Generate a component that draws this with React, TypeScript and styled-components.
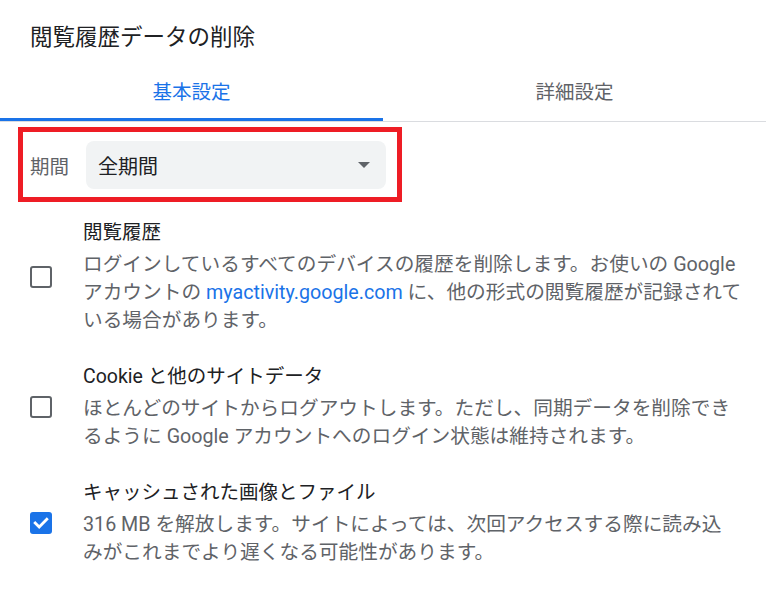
import React from "react";
import styled, { createGlobalStyle } from "styled-components";

const GlobalStyle = createGlobalStyle`
    body {
        margin: 0;
        background: #ffffff;
        font-family: "Roboto", "Noto Sans CJK JP", sans-serif;
        color: #202124;
    }
`;

const Dialog = styled.div`
    width: 766px;
    height: 611px;
    background: #fff;
    overflow: hidden;
`;

const Title = styled.h1`
    margin: 0;
    padding: 21px 30px 0;
    font-size: 22.5px;
    font-weight: 400;
    line-height: 32px;
    color: #202124;
`;

const Tabs = styled.div`
    display: flex;
    margin-top: 9px;
    border-bottom: 1px solid #dadce0;
`;

const Tab = styled.div<{ $active?: boolean }>`
    flex: 1;
    height: 56px;
    display: flex;
    align-items: center;
    justify-content: center;
    font-size: 19.5px;
    color: ${({ $active }) => ($active ? "#1a73e8" : "#5f6368")};
    border-bottom: 3px solid ${({ $active }) => ($active ? "#1a73e8" : "transparent")};
`;

const Highlight = styled.div`
    display: flex;
    align-items: center;
    gap: 17px;
    box-sizing: border-box;
    width: 384px;
    margin: 5px 0 0 18px;
    padding: 9px 11px 8px 7px;
    border: 5px solid #ee1d25;
`;

const PeriodLabel = styled.span`
    font-size: 19.5px;
    color: #5f6368;
`;

const Select = styled.div`
    display: flex;
    align-items: center;
    justify-content: space-between;
    box-sizing: border-box;
    width: 300px;
    height: 48px;
    padding: 0 16px 0 12px;
    border-radius: 8px;
    background: #f1f3f4;
    font-size: 20px;
    color: #202124;
`;

const Caret = styled.span`
    width: 0;
    height: 0;
    border-left: 6.5px solid transparent;
    border-right: 6.5px solid transparent;
    border-top: 6.5px solid #5f6368;
`;

const List = styled.div`
    display: flex;
    flex-direction: column;
    gap: 28px;
    margin-top: 17px;
    padding-left: 30px;
`;

const Item = styled.div`
    display: flex;
    align-items: center;
    gap: 31px;
`;

const Checkbox = styled.div<{ $checked: boolean }>`
    flex: none;
    box-sizing: border-box;
    width: 22px;
    height: 22px;
    border-radius: 3px;
    border: ${({ $checked }) => ($checked ? "none" : "2px solid #5f6368")};
    background: ${({ $checked }) => ($checked ? "#1a73e8" : "transparent")};
    svg {
        display: block;
    }
`;

const ItemText = styled.div`
    flex: 1;
    min-width: 0;
`;

const ItemLabel = styled.div`
    font-size: 19.5px;
    line-height: 28px;
    color: #202124;
    margin-bottom: 4px;
    white-space: nowrap;
`;

const ItemLine = styled.div`
    font-size: 19.7px;
    line-height: 28px;
    color: #5f6368;
    white-space: nowrap;
`;

const Link = styled.span`
    color: #1a73e8;
`;

const items = [
    {
        label: "閲覧履歴",
        checked: false,
        lines: [
            <>ログインしているすべてのデバイスの履歴を削除します。お使いの Google</>,
            <>アカウントの <Link>myactivity.google.com</Link> に、他の形式の閲覧履歴が記録されて</>,
            <>いる場合があります。</>,
        ],
    },
    {
        label: "Cookie と他のサイトデータ",
        checked: false,
        lines: [
            <>ほとんどのサイトからログアウトします。ただし、同期データを削除でき</>,
            <>るように Google アカウントへのログイン状態は維持されます。</>,
        ],
    },
    {
        label: "キャッシュされた画像とファイル",
        checked: true,
        lines: [
            <>316 MB を解放します。サイトによっては、次回アクセスする際に読み込</>,
            <>みがこれまでより遅くなる可能性があります。</>,
        ],
    },
];

const App = () => {
    return (
        <>
            <GlobalStyle />
            <Dialog>
                <Title>閲覧履歴データの削除</Title>
                <Tabs>
                    <Tab $active>基本設定</Tab>
                    <Tab>詳細設定</Tab>
                </Tabs>
                <Highlight>
                    <PeriodLabel>期間</PeriodLabel>
                    <Select>
                        <span>全期間</span>
                        <Caret />
                    </Select>
                </Highlight>
                <List>
                    {items.map((item, key) => (
                        <Item key={key}>
                            <Checkbox $checked={item.checked}>
                                {item.checked && (
                                    <svg width="22" height="22" viewBox="0 0 22 22">
                                        <path d="M5.2 11 L9.2 15 L16.8 7.2" fill="none" stroke="#fff" strokeWidth="2.8" strokeLinecap="square" />
                                    </svg>
                                )}
                            </Checkbox>
                            <ItemText>
                                <ItemLabel>{item.label}</ItemLabel>
                                {item.lines.map((line, i) => (
                                    <ItemLine key={i}>{line}</ItemLine>
                                ))}
                            </ItemText>
                        </Item>
                    ))}
                </List>
            </Dialog>
        </>
    );
};

export default App;
